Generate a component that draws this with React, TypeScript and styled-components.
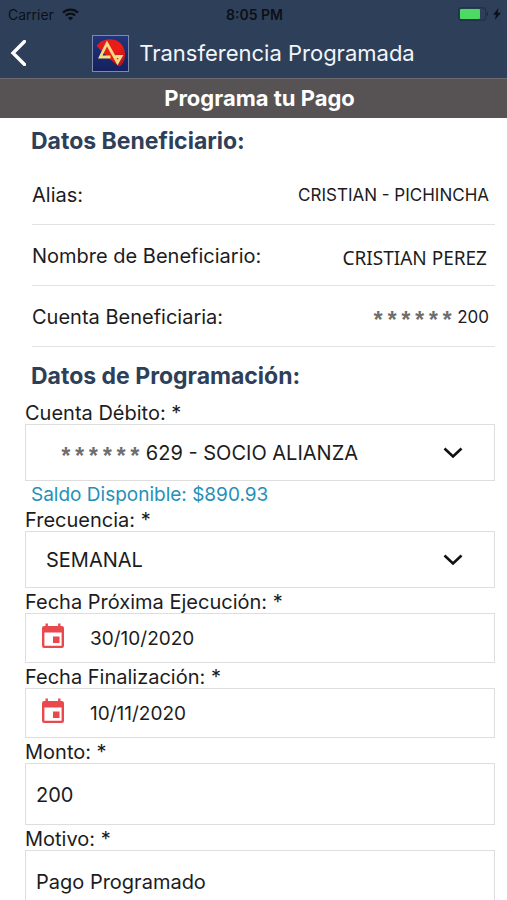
import React from "react";
import styled, { createGlobalStyle } from "styled-components";

const GlobalStyle = createGlobalStyle`
  html { scrollbar-width: none; }
  *, *::before, *::after { box-sizing: border-box; }
  body {
    margin: 0;
    background: #fff;
    color: #1c1c1e;
    font-family: Inter, "Liberation Sans", sans-serif;
    font-size: 20px;
  }
  button, input, select { font: inherit; color: inherit; }
`;

const Header = styled.header`
  background: #2e4059;
`;

const StatusBar = styled.div`
  display: grid;
  grid-template-columns: 1fr auto 1fr;
  align-items: center;
  height: 28px;
  padding: 0 6px 0 8px;
  color: #0b1017;
  font-size: 14px;
`;

const StatusGroup = styled.div<{ $end?: boolean }>`
  display: flex;
  align-items: center;
  justify-content: ${(p) => (p.$end ? "flex-end" : "flex-start")};
  gap: ${(p) => (p.$end ? 4 : 8)}px;
`;

const Clock = styled.time`
  font-weight: 600;
`;

const NavBar = styled.div`
  display: grid;
  grid-template-columns: 40px 1fr 40px;
  align-items: center;
  height: 50px;
  padding: 0 8px;
`;

const BackButton = styled.button`
  display: flex;
  align-items: center;
  height: 44px;
  padding: 0 2px;
  border: 0;
  background: none;
  color: #fff;
  cursor: pointer;
`;

const Brand = styled.div`
  display: flex;
  align-items: center;
  justify-content: center;
  gap: 10px;
  color: #f2f5f9;
`;

const Title = styled.h1`
  margin: 0;
  font-size: 22px;
  font-weight: 400;
  white-space: nowrap;
`;

const Band = styled.h2`
  margin: 0;
  padding-left: 12px;
  border-top: 1px solid #6b6a6f;
  background: #575354;
  color: #fff;
  font-size: 22px;
  font-weight: 700;
  line-height: 39px;
  text-align: center;
`;

const Content = styled.main`
  padding: 0 12px 24px 25px;
`;

const SectionTitle = styled.h3`
  margin: 0;
  padding-left: 6px;
  color: #2e4059;
  font-size: 23px;
  font-weight: 700;
  line-height: 46px;
`;

const Details = styled.dl`
  margin: 0 0 6px 7px;
`;

const DetailRow = styled.div`
  display: flex;
  align-items: center;
  justify-content: space-between;
  height: 61px;
  padding: 2px 6px 0 0;
  border-bottom: 1px solid #e2e2e2;
`;

const Term = styled.dt``;

const Value = styled.dd<{ $alt?: boolean }>`
  display: flex;
  align-items: center;
  gap: 3px;
  margin: 0;
  padding: ${(p) => (p.$alt ? "4px 2px 0 0" : "0")};
  font-family: ${(p) => (p.$alt ? '"Noto Sans", sans-serif' : "inherit")};
  font-size: ${(p) => (p.$alt ? 19 : 17)}px;
`;

const Mask = styled.span`
  padding-top: 12px;
  color: #6e6e6e;
  font-family: "Liberation Mono", monospace;
  font-size: 23px;
  font-weight: 700;
  line-height: 23px;
`;

const Form = styled.form`
  display: flex;
  flex-direction: column;
`;

const Label = styled.label`
  padding-top: 3px;
  line-height: 22px;
`;

const Box = styled.div<{ $height: number; $inset: number }>`
  display: flex;
  align-items: center;
  height: ${(p) => p.$height}px;
  padding: 1px 10px 0 ${(p) => p.$inset}px;
  border: 1px solid #dedede;
`;

const SelectWrap = styled.div`
  display: grid;
  flex: 1;
  align-items: center;
  height: 100%;

  > * { grid-area: 1 / 1; }
  > svg {
    justify-self: end;
    margin-right: 21px;
    pointer-events: none;
  }
`;

const Select = styled.select`
  width: 100%;
  height: 100%;
  padding: 0 0 0 4px;
  border: 0;
  background: transparent;
  appearance: none;
`;

const Input = styled.input<{ $date?: boolean }>`
  flex: 1;
  min-width: 0;
  height: 100%;
  padding: 0;
  border: 0;
  background: transparent;
  font-size: ${(p) => (p.$date ? 19 : 20)}px;
`;

const CalendarSlot = styled.span`
  display: flex;
  width: 49px;
  padding-bottom: 5px;
`;

const Balance = styled.output`
  padding: 3px 0 0 6px;
  color: #2590b8;
  font-size: 19px;
  line-height: 22px;
`;

const Wifi = () => (
  <svg width="17" height="13" viewBox="0 0 17 13" fill="none" stroke="currentColor" strokeWidth="2.2" aria-hidden="true">
    <path d="M1 4.600C5.200.5 11.800.5 16 4.600" />
    <path d="M3.800 7.500c2.600-2.500 6.800-2.500 9.400 0" />
    <path d="M5.900 9.800c1.500-1.400 3.700-1.400 5.200 0L8.500 12.500Z" fill="currentColor" stroke="none" />
  </svg>
);

const Battery = () => (
  <svg width="31" height="14" viewBox="0 0 31 14" aria-hidden="true">
    <rect x=".7" y=".7" width="27" height="12.600" rx="3" fill="none" stroke="#22324a" strokeWidth="1.400" />
    <rect x="2" y="2" width="20" height="10" rx="1" fill="#4cd964" />
    <path d="M29 5c1.400.5 1.400 3.500 0 4Z" fill="#182436" />
  </svg>
);

const Bolt = () => (
  <svg width="8" height="12" viewBox="0 0 8 12" fill="currentColor" aria-hidden="true">
    <path d="M5.500 0 0 6.800h3L1.800 12 8 4.800H4.600Z" />
  </svg>
);

const BackArrow = () => (
  <svg width="16" height="26" viewBox="0 0 16 26" fill="none" stroke="currentColor" strokeWidth="3.400" aria-hidden="true">
    <path d="M14.500 1.500 3 13l11.500 11.500" strokeLinecap="round" />
  </svg>
);

const Logo = () => (
  <svg width="37" height="37" viewBox="0 0 37 37" aria-hidden="true">
    <defs>
      <linearGradient id="logoBlue" x1="0" y1="0" x2="0" y2="1">
        <stop offset="0" stopColor="#23357c" />
        <stop offset="1" stopColor="#14205f" />
      </linearGradient>
      <linearGradient id="logoRed" x1="0" y1="0" x2="1" y2="1">
        <stop offset="0" stopColor="#d91e20" />
        <stop offset=".55" stopColor="#ee1c17" />
        <stop offset="1" stopColor="#a41426" />
      </linearGradient>
    </defs>
    <rect x=".5" y=".5" width="36" height="36" fill="url(#logoBlue)" stroke="#7d8ba8" />
    <path d="M4.500 11C8 6 13 4 19 4.200 27 4.500 33 11 33 19c0 6-2 10-5.500 12.500C21 28 12 18 4.500 11Z" fill="url(#logoRed)" />
    <path
      d="M18.500 22H8.300L15 8.500 25.500 27.500 29 21.500H23.500"
      fill="none"
      stroke="#f5dd86"
      strokeWidth="2.800"
      strokeLinejoin="miter"
    />
  </svg>
);

const Chevron = () => (
  <svg width="20" height="12" viewBox="0 0 20 12" fill="none" stroke="#111" strokeWidth="2.600" aria-hidden="true">
    <path d="m1.500 1.500 8.500 8 8.500-8" />
  </svg>
);

const Calendar = () => (
  <svg width="24" height="26" viewBox="0 0 24 26" fill="#e9494d" aria-hidden="true">
    <path
      fillRule="evenodd"
      d="M4.500.5h2.400V3h10.200V.5h2.400V3h1.300A2.200 2.200 0 0 1 23 5.200v17.600a2.200 2.200 0 0 1-2.200 2.200H3.200A2.200 2.200 0 0 1 1 22.800V5.200A2.200 2.200 0 0 1 3.200 3h1.300ZM3.400 9.500v13.200h17.200V9.500Z"
    />
    <rect x="12" y="13.500" width="6.500" height="6.500" />
  </svg>
);

const hiddenPart = "******";

export default function App() {
  return (
    <>
      <GlobalStyle />
      <Header>
        <StatusBar>
          <StatusGroup>
            <span>Carrier</span>
            <Wifi />
          </StatusGroup>
          <Clock>8:05 PM</Clock>
          <StatusGroup $end>
            <Battery />
            <Bolt />
          </StatusGroup>
        </StatusBar>
        <NavBar>
          <BackButton type="button" aria-label="Volver">
            <BackArrow />
          </BackButton>
          <Brand>
            <Logo />
            <Title>Transferencia Programada</Title>
          </Brand>
        </NavBar>
        <Band>Programa tu Pago</Band>
      </Header>
      <Content>
        <SectionTitle>Datos Beneficiario:</SectionTitle>
        <Details>
          <DetailRow>
            <Term>Alias:</Term>
            <Value>CRISTIAN - PICHINCHA</Value>
          </DetailRow>
          <DetailRow>
            <Term>Nombre de Beneficiario:</Term>
            <Value $alt>CRISTIAN PEREZ</Value>
          </DetailRow>
          <DetailRow>
            <Term>Cuenta Beneficiaria:</Term>
            <Value>
              <Mask>{hiddenPart}</Mask>200
            </Value>
          </DetailRow>
        </Details>
        <SectionTitle>Datos de Programación:</SectionTitle>
        <Form>
          <Label htmlFor="cuenta">Cuenta Débito: *</Label>
          <Box $height={57} $inset={33}>
            <Mask>{hiddenPart}</Mask>
            <SelectWrap>
              <Select id="cuenta" defaultValue="629">
                <option value="629">629 - SOCIO ALIANZA</option>
              </Select>
              <Chevron />
            </SelectWrap>
          </Box>
          <Balance htmlFor="cuenta">Saldo Disponible: $890.93</Balance>
          <Label htmlFor="frecuencia">Frecuencia: *</Label>
          <Box $height={57} $inset={16}>
            <SelectWrap>
              <Select id="frecuencia" defaultValue="SEMANAL">
                <option>SEMANAL</option>
              </Select>
              <Chevron />
            </SelectWrap>
          </Box>
          <Label htmlFor="ejecucion">Fecha Próxima Ejecución: *</Label>
          <Box $height={50} $inset={15}>
            <CalendarSlot>
              <Calendar />
            </CalendarSlot>
            <Input id="ejecucion" $date defaultValue="30/10/2020" />
          </Box>
          <Label htmlFor="finalizacion">Fecha Finalización: *</Label>
          <Box $height={50} $inset={15}>
            <CalendarSlot>
              <Calendar />
            </CalendarSlot>
            <Input id="finalizacion" $date defaultValue="10/11/2020" />
          </Box>
          <Label htmlFor="monto">Monto: *</Label>
          <Box $height={62} $inset={10}>
            <Input id="monto" inputMode="decimal" defaultValue="200" />
          </Box>
          <Label htmlFor="motivo">Motivo: *</Label>
          <Box $height={62} $inset={10}>
            <Input id="motivo" defaultValue="Pago Programado" />
          </Box>
        </Form>
      </Content>
    </>
  );
}
